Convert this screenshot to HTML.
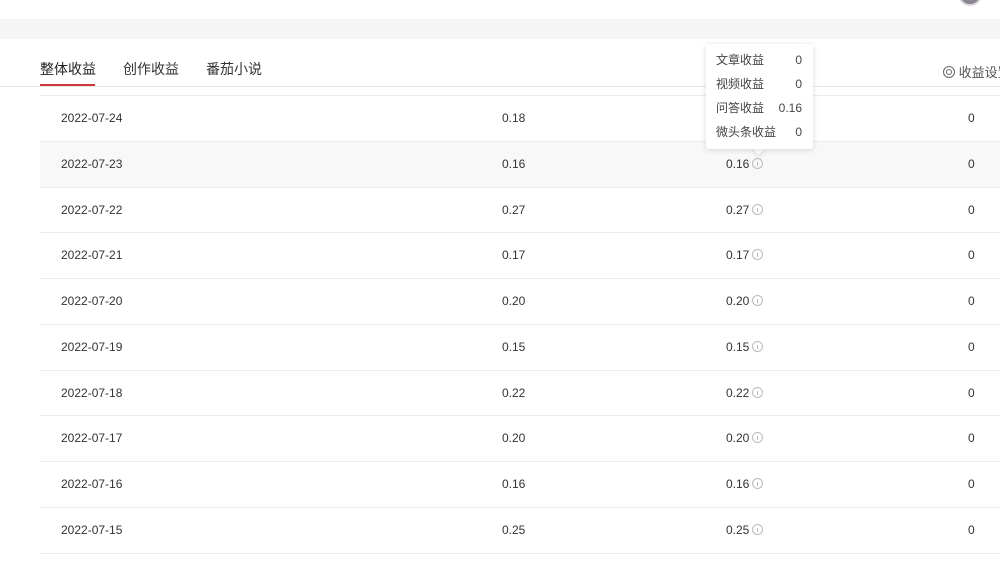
<!DOCTYPE html>
<html><head><meta charset="utf-8"><style>
*{margin:0;padding:0;box-sizing:border-box}
body{width:1000px;height:564px;overflow:hidden;background:#fff;font-family:"Liberation Sans","Noto Sans CJK SC",sans-serif;color:#222;position:relative}
.top{position:absolute;left:0;top:0;width:1000px;height:19px;background:#fff}
.band{position:absolute;left:0;top:19px;width:1000px;height:20px;background:#f5f5f5}
.avatar{position:absolute;left:958px;top:-18px;width:24px;height:24px;border-radius:50%;background:#8a8590;border:2px solid #d8d6dc}
.tab{position:absolute;top:59px;font-size:14px;color:#333}
.ul{position:absolute;left:40px;top:84px;width:55px;height:2px;background:#d0393a}
.hl{position:absolute;left:0;top:86px;width:1000px;height:1px;background:#e8e8e8}
.set{position:absolute;left:943px;top:62px;font-size:13px;color:#555;white-space:nowrap}
.row{position:absolute;left:40px;width:960px;height:46px;border-top:1px solid #ececec;font-size:12px;color:#333}
.row.g{background:#f8f8f8}
.row span{position:absolute;top:15px}
.c1{left:21px}.c2{left:462px}.c3{left:686px}.c4{left:928px}
.i{display:inline-block;width:11px;height:11px;border:1px solid #bbb;border-radius:50%;vertical-align:-1px;margin-left:3px;position:relative}
.i:after{content:"";position:absolute;left:4px;top:3px;width:1px;height:4px;background:#bbb}
.tip{position:absolute;left:706px;top:44px;width:107px;height:105px;background:#fff;border-radius:3px;box-shadow:0 1px 6px rgba(0,0,0,.15);font-size:12px;color:#444}
.tip div{position:absolute;left:10px;right:11px;height:16px;line-height:16px}
.tip b{font-weight:normal;position:absolute;right:0;top:0;line-height:16px}
.arr{position:absolute;left:754px;top:144px;width:9px;height:9px;background:#fff;transform:rotate(45deg);box-shadow:2px 2px 3px rgba(0,0,0,.08)}
</style></head><body>
<div class="top"></div><div class="band"></div><div class="avatar"></div>
<div class="tab" style="left:40px;color:#222">整体收益</div>
<div class="tab" style="left:123px">创作收益</div>
<div class="tab" style="left:206px">番茄小说</div>
<div class="ul"></div><div class="hl"></div>
<div class="set"><span style="display:inline-block;width:12px;height:12px;border:1px solid #666;border-radius:50%;vertical-align:-1px;position:relative"><span style="position:absolute;left:2px;top:2px;width:6px;height:6px;border:1px solid #666;border-radius:50%"></span></span> 收益设置</div>

<div class="row" style="top:95px"><span class="c1">2022-07-24</span><span class="c2">0.18</span><span class="c3">0.18 <i class="i"></i></span><span class="c4">0</span></div>
<div class="row g" style="top:141px"><span class="c1">2022-07-23</span><span class="c2">0.16</span><span class="c3">0.16<i class="i"></i></span><span class="c4">0</span></div>
<div class="row" style="top:187px"><span class="c1">2022-07-22</span><span class="c2">0.27</span><span class="c3">0.27<i class="i"></i></span><span class="c4">0</span></div>
<div class="row" style="top:232px"><span class="c1">2022-07-21</span><span class="c2">0.17</span><span class="c3">0.17<i class="i"></i></span><span class="c4">0</span></div>
<div class="row" style="top:278px"><span class="c1">2022-07-20</span><span class="c2">0.20</span><span class="c3">0.20<i class="i"></i></span><span class="c4">0</span></div>
<div class="row" style="top:324px"><span class="c1">2022-07-19</span><span class="c2">0.15</span><span class="c3">0.15<i class="i"></i></span><span class="c4">0</span></div>
<div class="row" style="top:370px"><span class="c1">2022-07-18</span><span class="c2">0.22</span><span class="c3">0.22<i class="i"></i></span><span class="c4">0</span></div>
<div class="row" style="top:415px"><span class="c1">2022-07-17</span><span class="c2">0.20</span><span class="c3">0.20<i class="i"></i></span><span class="c4">0</span></div>
<div class="row" style="top:461px"><span class="c1">2022-07-16</span><span class="c2">0.16</span><span class="c3">0.16<i class="i"></i></span><span class="c4">0</span></div>
<div class="row" style="top:507px"><span class="c1">2022-07-15</span><span class="c2">0.25</span><span class="c3">0.25<i class="i"></i></span><span class="c4">0</span></div>
<div class="row" style="top:553px;height:11px"></div>

<div class="arr"></div>
<div class="tip">
<div style="top:8px">文章收益<b>0</b></div>
<div style="top:32px">视频收益<b>0</b></div>
<div style="top:56px">问答收益<b>0.16</b></div>
<div style="top:80px">微头条收益<b>0</b></div>
</div>
</body></html>
